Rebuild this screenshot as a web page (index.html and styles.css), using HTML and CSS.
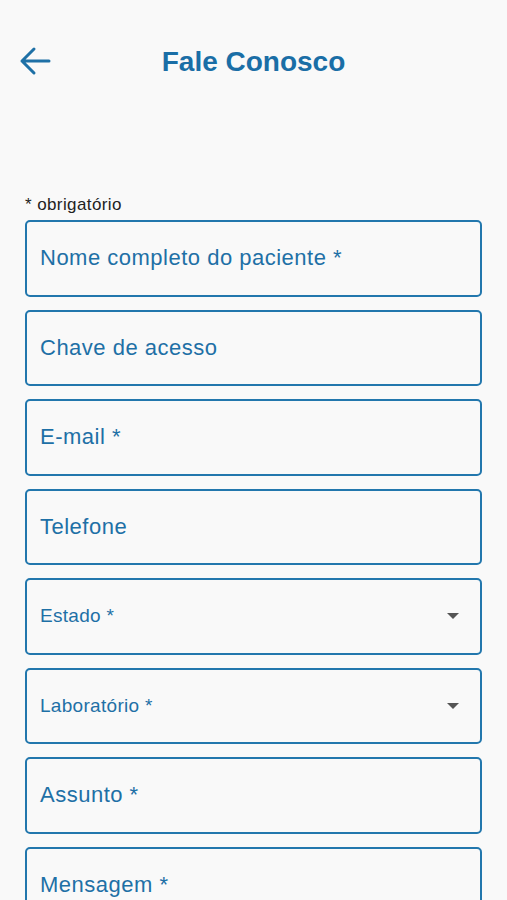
FILE: index.html
```html
<!DOCTYPE html>
<html lang="pt-BR">

<head>
  <meta charset="UTF-8">
  <meta name="viewport" content="width=device-width, initial-scale=1.0">
  <title>Fale Conosco</title>
  <link rel="stylesheet" href="styles.css">
</head>

<body>
  <div class="screen">
    <div class="status-bar"></div>

    <div class="header">
      <button class="back" aria-label="Voltar">
        <svg width="34" height="34" viewBox="0 0 34 34">
          <path d="M31 17 H4 M16 5 L4 17 L16 29" fill="none" stroke="#1e70a6" stroke-width="3" stroke-linecap="round" stroke-linejoin="round" />
        </svg>
      </button>
      <h1>Fale Conosco</h1>
      <span></span>
    </div>

    <div class="form">
      <p class="required">* obrigatório</p>

      <div class="field"><span>Nome completo do paciente *</span></div>
      <div class="field"><span>Chave de acesso</span></div>
      <div class="field"><span>E-mail *</span></div>
      <div class="field"><span>Telefone</span></div>
      <div class="field select"><span>Estado *</span><i class="caret"></i></div>
      <div class="field select"><span>Laboratório *</span><i class="caret"></i></div>
      <div class="field"><span>Assunto *</span></div>
      <div class="field"><span>Mensagem *</span></div>
    </div>
  </div>
</body>

</html>
```

FILE: styles.css
```css
body {
  margin: 0;
  background-color: #f9f9f9;
  font-family: "Liberation Sans", Arial, sans-serif;
  color: #1e70a6;
}

.screen {
  height: 900px;
  overflow: hidden;
}

.status-bar {
  height: 36px;
}

.header {
  display: grid;
  grid-template-columns: 60px 1fr 60px;
  align-items: center;
  height: 50px;
}

.back {
  border: none;
  background: none;
  padding: 0 0 0 18px;
  height: 34px;
  display: flex;
  align-items: center;
  cursor: pointer;
}

.header h1 {
  margin: 0;
  text-align: center;
  font-size: 28px;
  font-weight: bold;
  color: #1a6ea6;
  padding-top: 1px;
}

.form {
  padding: 110px 25px 0 25px;
  display: flex;
  flex-direction: column;
  gap: 13px;
}

.required {
  margin: 0 0 -7px 0;
  font-size: 17px;
  letter-spacing: 0.4px;
  color: #222;
  line-height: 18px;
}

.field {
  height: 76.5px;
  box-sizing: border-box;
  border: 2.5px solid #2277ad;
  border-radius: 5px;
  display: flex;
  align-items: center;
  padding: 0 13px;
  font-size: 22px;
  letter-spacing: 0.5px;
  color: #1e70a6;
  flex-shrink: 0;
}

.select {
  justify-content: space-between;
  font-size: 19px;
  letter-spacing: 0.3px;
  padding-right: 21px;
}

.caret {
  width: 0;
  height: 0;
  border-left: 6px solid transparent;
  border-right: 6px solid transparent;
  border-top: 6px solid #555;
}
```
